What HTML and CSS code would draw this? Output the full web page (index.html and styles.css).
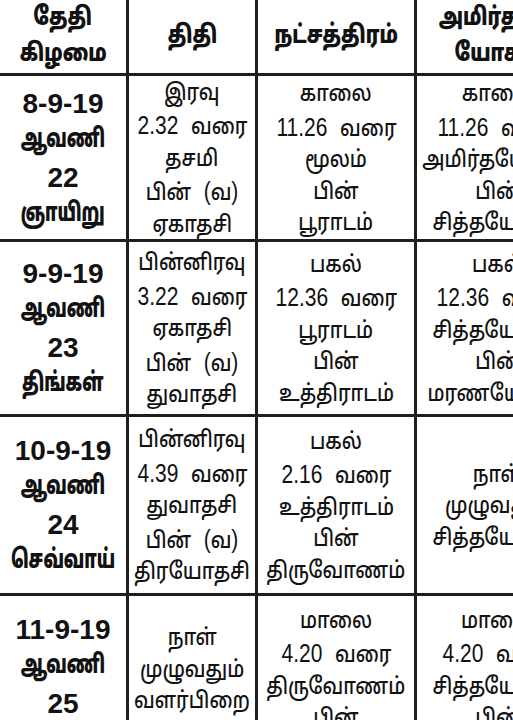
FILE: index.html
```html
<!DOCTYPE html>
<html lang="ta">
<head>
<meta charset="utf-8">
<title>பஞ்சாங்கம்</title>
<link rel="stylesheet" href="styles.css">
</head>
<body>
<div class="sheet">
  <div class="cell head"><span>தேதி</span><span>கிழமை</span></div>
  <div class="cell head"><span>திதி</span></div>
  <div class="cell head"><span>நட்சத்திரம்</span></div>
  <div class="cell head"><span>அமிர்தாதி</span><span>யோகம்</span></div>

  <div class="cell date"><span class="dnum">8-9-19</span><span>ஆவணி</span><span class="dnum">22</span><span>ஞாயிறு</span></div>
  <div class="cell"><span>இரவு</span><span><span class="num">2.32</span> வரை</span><span>தசமி</span><span>பின் <span class="num">(</span>வ<span class="num">)</span></span><span>ஏகாதசி</span></div>
  <div class="cell"><span>காலை</span><span><span class="num">11.26</span> வரை</span><span>மூலம்</span><span>பின்</span><span>பூராடம்</span></div>
  <div class="cell"><span>காலை</span><span><span class="num">11.26</span> வரை</span><span>அமிர்தயோகம்</span><span>பின்</span><span>சித்தயோகம்</span></div>

  <div class="cell date"><span class="dnum">9-9-19</span><span>ஆவணி</span><span class="dnum">23</span><span>திங்கள்</span></div>
  <div class="cell"><span>பின்னிரவு</span><span><span class="num">3.22</span> வரை</span><span>ஏகாதசி</span><span>பின் <span class="num">(</span>வ<span class="num">)</span></span><span>துவாதசி</span></div>
  <div class="cell"><span>பகல்</span><span><span class="num">12.36</span> வரை</span><span>பூராடம்</span><span>பின்</span><span>உத்திராடம்</span></div>
  <div class="cell"><span>பகல்</span><span><span class="num">12.36</span> வரை</span><span>சித்தயோகம்</span><span>பின்</span><span>மரணயோகம்</span></div>

  <div class="cell date"><span class="dnum">10-9-19</span><span>ஆவணி</span><span class="dnum">24</span><span>செவ்வாய்</span></div>
  <div class="cell"><span>பின்னிரவு</span><span><span class="num">4.39</span> வரை</span><span>துவாதசி</span><span>பின் <span class="num">(</span>வ<span class="num">)</span></span><span>திரயோதசி</span></div>
  <div class="cell"><span>பகல்</span><span><span class="num">2.16</span> வரை</span><span>உத்திராடம்</span><span>பின்</span><span>திருவோணம்</span></div>
  <div class="cell"><span>நாள்</span><span>முழுவதும்</span><span>சித்தயோகம்</span></div>

  <div class="cell date"><span class="dnum">11-9-19</span><span>ஆவணி</span><span class="dnum">25</span><span>புதன்</span></div>
  <div class="cell"><span>நாள்</span><span>முழுவதும்</span><span>வளர்பிறை</span><span>திரயோதசி</span></div>
  <div class="cell"><span>மாலை</span><span><span class="num">4.20</span> வரை</span><span>திருவோணம்</span><span>பின்</span><span>அவிட்டம்</span></div>
  <div class="cell"><span>மாலை</span><span><span class="num">4.20</span> வரை</span><span>சித்தயோகம்</span><span>பின்</span><span>அமிர்தயோகம்</span></div>
</div>
</body>
</html>
```

FILE: styles.css
```css
html, body {
  margin: 0;
  padding: 0;
  background: #ffffff;
  overflow: hidden;
}

.sheet {
  display: grid;
  grid-template-columns: 126px 126px 156px 161px;
  grid-template-rows: 73px 163px 172px 176px 176px;
  gap: 3px;
  width: 578px;
  background: #1e1e1e;
  font-family: "Noto Sans Tamil", "Lohit Tamil", "Noto Sans", "DejaVu Sans", sans-serif;
  color: #121212;
}

.cell {
  background: #ffffff;
  display: flex;
  flex-direction: column;
  align-items: center;
  justify-content: center;
  text-align: center;
  font-size: 23px;
  font-weight: 500;
  line-height: 31.5px;
  word-spacing: 9px;
  white-space: nowrap;
  padding-top: 6px;
  box-sizing: border-box;
}

.cell > span {
  transform: scaleX(0.84);
}

.num {
  font-family: "Liberation Sans Narrow", "Liberation Sans", sans-serif;
  font-size: 25px;
  font-weight: 400;
}

.head {
  font-weight: 900;
  font-size: 25px;
  line-height: 36px;
  padding-top: 0;
}

.head > span {
  transform: scaleX(0.76);
}

.date {
  font-weight: 900;
  font-size: 26px;
  line-height: 37px;
  word-spacing: 0;
  padding-top: 2px;
}

.date > span {
  transform: scaleX(0.66);
}

.date > .dnum {
  font-family: "Liberation Sans", sans-serif;
  font-weight: 700;
  font-size: 28px;
  transform: none;
}
```
